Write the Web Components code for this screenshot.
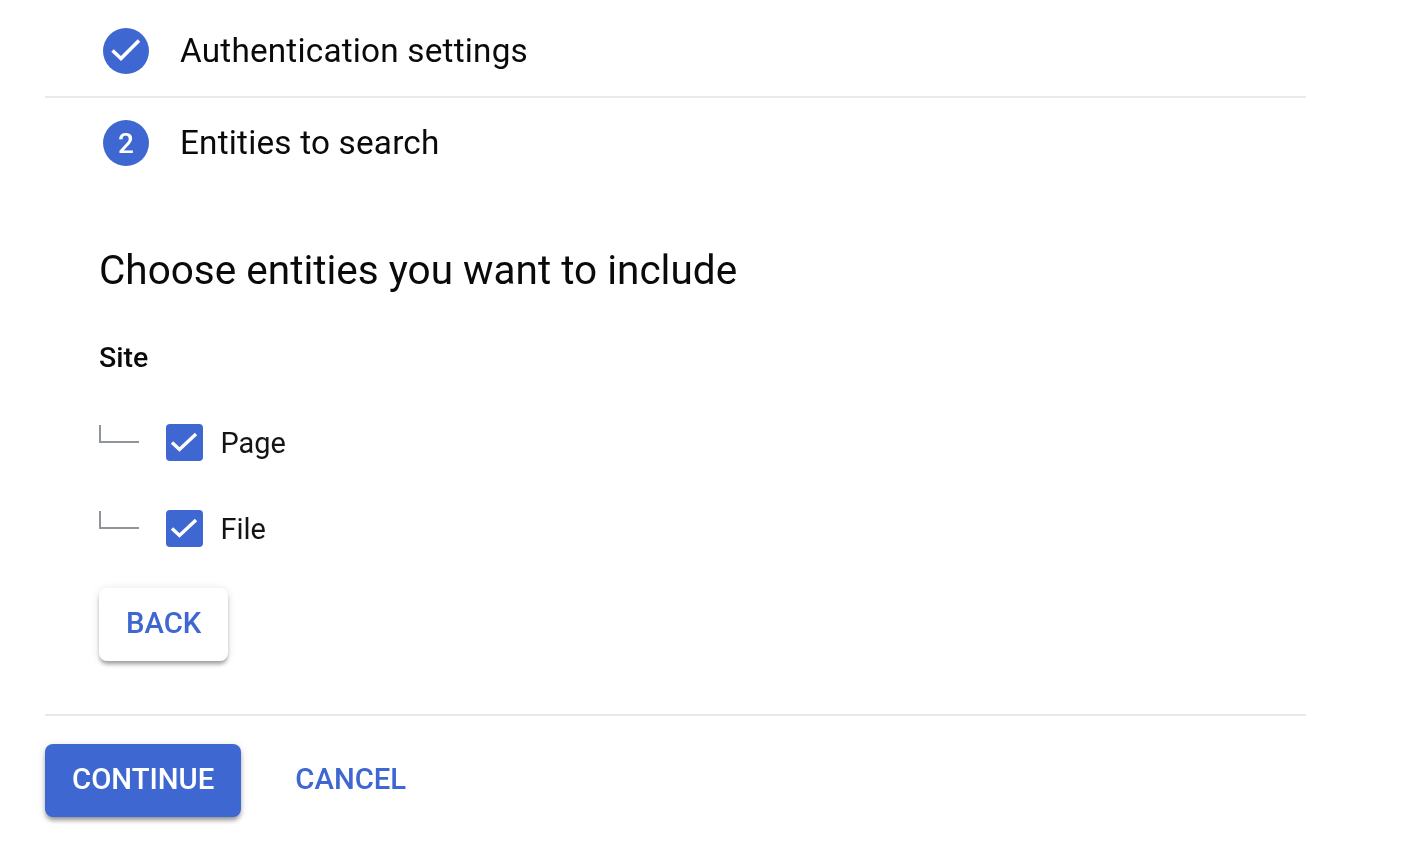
<!DOCTYPE html>
<html>
<head>
<meta charset="utf-8">
<title>Entities to search</title>
<style>
  html, body { margin: 0; background: #fff; }
  body { font-family: Roboto, "Liberation Sans", sans-serif; color: #111; }
</style>
</head>
<body>
<setup-stepper>
  <step-header state="done">Authentication settings</step-header>
  <hr-line></hr-line>
  <step-header number="2">Entities to search</step-header>
  <entity-panel>
    <entity-row>Page</entity-row>
    <entity-row>File</entity-row>
  </entity-panel>
  <hr-line></hr-line>
  <step-actions></step-actions>
</setup-stepper>

<script>
const CHECK = '<svg viewBox="0 0 46 46" width="46" height="46"><path d="M9.5 22.5l8.5 8L36 12.5" fill="none" stroke="#fff" stroke-width="3.6"/></svg>';

class SetupStepper extends HTMLElement {
    connectedCallback() {
        this.attachShadow({mode: 'open'}).innerHTML = `
          <style>
            :host { display: flex; flex-direction: column; width: 1261px; margin-left: 45px; padding-bottom: 20px; filter: blur(.4px); }
          </style>
          <slot></slot>`;
    }
}

class HrLine extends HTMLElement {
    connectedCallback() {
        this.attachShadow({mode: 'open'}).innerHTML = `
          <style>
            :host { display: block; height: 2px; background: #e8e9ea; }
          </style>`;
    }
}

class StepHeader extends HTMLElement {
    connectedCallback() {
        const done = this.getAttribute('state') === 'done';
        this.attachShadow({mode: 'open'}).innerHTML = `
          <style>
            :host {
              display: flex; align-items: center; gap: 31px; padding-left: 58px;
              box-sizing: border-box; height: ${done ? 96 : 90}px; padding-top: ${done ? 6 : 0}px;
              font-size: 33.3px; letter-spacing: .2px; color: #0a0a0a;
            }
            .badge {
              width: 46px; height: 46px; border-radius: 50%; background: #3f67d1;
              display: flex; align-items: center; justify-content: center;
              color: #fff; font-size: 28px; font-weight: 500; letter-spacing: 0; flex: none;
            }
            .label { padding-bottom: 2px; }
            svg { display: block; }
          </style>
          <span class="badge">${done ? CHECK : this.getAttribute('number')}</span>
          <span class="label"><slot></slot></span>`;
    }
}

class EntityPanel extends HTMLElement {
    connectedCallback() {
        this.attachShadow({mode: 'open'}).innerHTML = `
          <style>
            :host { display: flex; flex-direction: column; padding: 57px 0 53px 54px; }
            h2 { margin: 0; font-size: 40.5px; font-weight: 400; line-height: 50px; color: #0a0a0a; }
            h3 { margin: 45px 0 0; font-size: 28.5px; font-weight: 500; line-height: 36px; color: #0a0a0a; }
            .rows { display: flex; flex-direction: column; gap: 45px; margin-top: 46px; }
            action-button { margin-top: 39px; align-self: flex-start; }
          </style>
          <h2>Choose entities you want to include</h2>
          <h3>Site</h3>
          <div class="rows"><slot></slot></div>
          <action-button kind="raised">BACK</action-button>`;
    }
}

class EntityRow extends HTMLElement {
    connectedCallback() {
        this.attachShadow({mode: 'open'}).innerHTML = `
          <style>
            :host { display: flex; align-items: center; height: 41px; font-size: 28.9px; color: #141414; }
            .elbow {
              width: 40.5px; height: 18px; box-sizing: border-box; margin: -18px 27px 0 -.5px;
              border-left: 2px solid #8f959b; border-bottom: 2px solid #8f959b; flex: none;
            }
            .box {
              width: 37px; height: 37px; border-radius: 4px; background: #3f67d1;
              margin-right: 17.5px; flex: none;
            }
            svg { display: block; }
          </style>
          <span class="elbow"></span>
          <span class="box"><svg viewBox="0 0 37 37" width="37" height="37"><path d="M6 18.5l7.5 7L30 10" fill="none" stroke="#fff" stroke-width="3.4"/></svg></span>
          <span><slot></slot></span>`;
    }
}

class ActionButton extends HTMLElement {
    connectedCallback() {
        this.attachShadow({mode: 'open'}).innerHTML = `
          <style>
            :host {
              display: inline-flex; align-items: center; justify-content: center; box-sizing: border-box;
              height: 73px; padding: 0 27px 3px; border-radius: 8px; font-size: 29.3px; font-weight: 500;
              color: #3f67d1;
            }
            :host([kind=raised]) { background: #fff; box-shadow: 0 4px 4px -1px rgba(0,0,0,.35), 0 1px 8px rgba(0,0,0,.12); }
            :host([kind=primary]) { background: #3f67d1; color: #fff; box-shadow: 0 4px 5px -1px rgba(0,0,0,.4), 0 1px 8px rgba(0,0,0,.12); }
          </style>
          <slot></slot>`;
    }
}

class StepActions extends HTMLElement {
    connectedCallback() {
        this.attachShadow({mode: 'open'}).innerHTML = `
          <style>
            :host { display: flex; gap: 27px; padding-top: 28px; }
          </style>
          <action-button kind="primary">CONTINUE</action-button>
          <action-button>CANCEL</action-button>`;
    }
}

customElements.define('action-button', ActionButton);
customElements.define('hr-line', HrLine);
customElements.define('step-header', StepHeader);
customElements.define('entity-row', EntityRow);
customElements.define('entity-panel', EntityPanel);
customElements.define('step-actions', StepActions);
customElements.define('setup-stepper', SetupStepper);
</script>
</body>
</html>
